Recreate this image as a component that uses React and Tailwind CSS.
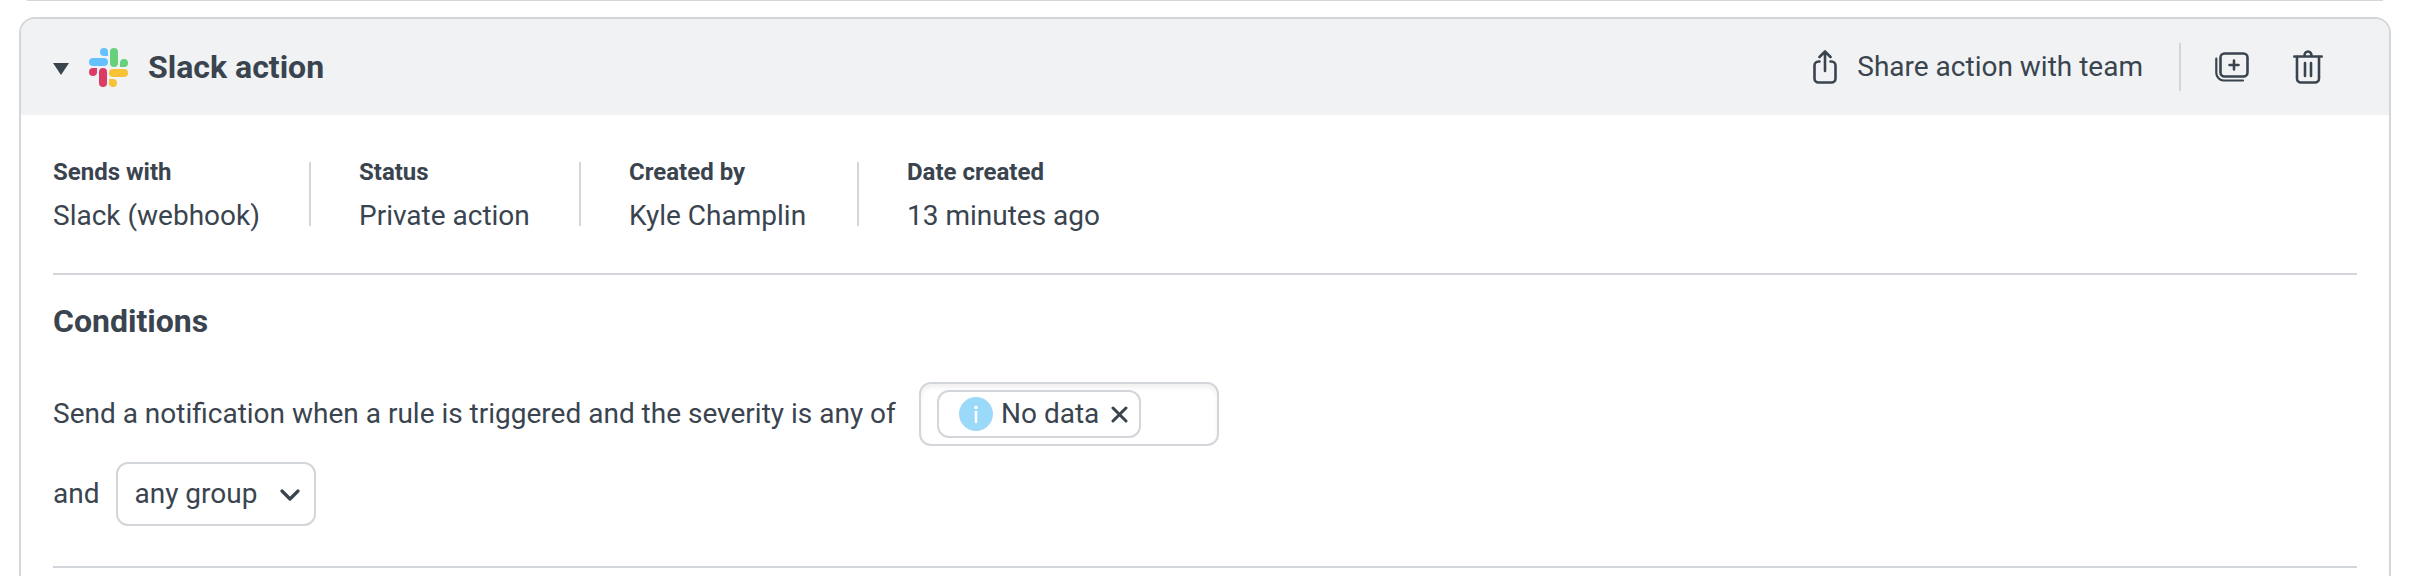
const META = [
  { label: 'Sends with', value: 'Slack (webhook)', box: 'w-[258px] border-r-2' },
  { label: 'Status', value: 'Private action', box: 'w-[270px] border-r-2 pl-12' },
  { label: 'Created by', value: 'Kyle Champlin', box: 'w-[278px] border-r-2 pl-12' },
  { label: 'Date created', value: '13 minutes ago', box: 'pl-12' },
];

function SlackLogo() {
  return (
    <svg width="39" height="39" viewBox="0 0 39 39" aria-hidden="true">
      <g fill="#63c1fd">
        <rect x="0" y="10" width="19" height="8" rx="4" />
        <path d="M19 8h-4a4 4 0 1 1 4-4z" />
      </g>
      <g fill="#66d07a">
        <rect x="21" y="0" width="8" height="19" rx="4" />
        <path d="M31 19v-4a4 4 0 1 1 4 4z" />
      </g>
      <g fill="#f8c237">
        <rect x="20" y="21" width="19" height="8" rx="4" />
        <path d="M20 31h4a4 4 0 1 1-4 4z" />
      </g>
      <g fill="#dc3c63">
        <rect x="10" y="20" width="8" height="19" rx="4" />
        <path d="M8 20v4a4 4 0 1 1-4-4z" />
      </g>
    </svg>
  );
}

function ShareIcon() {
  return (
    <svg width="24" height="34" viewBox="0 0 24 34" fill="none" stroke="currentColor" strokeWidth="2.6" strokeLinecap="round" strokeLinejoin="round" aria-hidden="true">
      <path d="M6.500 11.500H5.500a4 4 0 0 0-4 4V28.500a4 4 0 0 0 4 4H18.500a4 4 0 0 0 4-4V15.500a4 4 0 0 0-4-4H17.500" />
      <path d="M12 21V2M6.500 7 12 1.500l5.500 5.500" />
    </svg>
  );
}

function DuplicateIcon() {
  return (
    <svg width="34" height="30" viewBox="0 0 34 30" fill="none" stroke="currentColor" strokeWidth="2.6" strokeLinecap="round" aria-hidden="true">
      <rect x="5.500" y="1.500" width="27" height="23" rx="4" />
      <path d="M1.300 6.500V21a7.500 7.500 0 0 0 7.500 7.500H28" strokeWidth="2.200" />
      <path d="M19 8.500v9M14.500 13h9" />
    </svg>
  );
}

function TrashIcon() {
  return (
    <svg width="30" height="34" viewBox="0 0 30 34" fill="none" stroke="currentColor" strokeWidth="2.6" strokeLinecap="round" aria-hidden="true">
      <path d="M1.300 6.500H28.700M11.500 5.500a3.500 4 0 0 1 7 0" />
      <path d="M4 7V28.500a4 4 0 0 0 4 4H22a4 4 0 0 0 4-4V7" />
      <path d="M12 13v13M18 13v13" />
    </svg>
  );
}

export default function App() {
  return (
    <main className="flex min-h-screen flex-col bg-white pr-[23px] pl-[19px] font-[Roboto,'Open_Sans',sans-serif] text-[28px] leading-9 text-[#3a444f]">
      <div className="mx-2 mb-4 h-px bg-[#d2d6da]" />
      <section className="flex-1 overflow-hidden rounded-t-2xl border-2 border-b-0 border-[#d2d6da]">
        <header className="flex h-24 items-center bg-[#f1f2f4] px-8">
          <button type="button" aria-label="Collapse" className="mr-5 pt-1">
            <svg width="16" height="12" viewBox="0 0 16 12" fill="currentColor" aria-hidden="true">
              <path d="M0 0h16L8 12z" />
            </svg>
          </button>
          <SlackLogo />
          <h2 className="ml-5 text-[32px] font-bold">Slack action</h2>
          <div className="ml-auto flex h-12 items-center pr-[34px]">
            <button type="button" className="flex items-center gap-5">
              <ShareIcon />
              Share action with team
            </button>
            <span className="mr-[34px] ml-9 h-12 w-0.5 bg-[#d2d6da]" />
            <button type="button" aria-label="Duplicate action">
              <DuplicateIcon />
            </button>
            <button type="button" aria-label="Delete action" className="ml-11">
              <TrashIcon />
            </button>
          </div>
        </header>

        <div className="px-8">
          <dl className="mt-[47px] flex">
            {META.map((m) => (
              <div key={m.label} className={`h-16 border-[#d2d6da] ${m.box}`}>
                <dt className="text-2xl leading-5 font-bold">{m.label}</dt>
                <dd className="mt-4">{m.value}</dd>
              </div>
            ))}
          </dl>
          <hr className="mt-[47px] border-t-2 border-[#d2d6da]" />

          <h3 className="mt-[26px] text-[32px] leading-10 font-bold">Conditions</h3>
          <div className="mt-[41px] flex items-center gap-4">
            <label htmlFor="severity" className="w-[850px]">
              Send a notification when a rule is triggered and the severity is any of
            </label>
            <div className="flex h-16 w-[300px] items-center rounded-xl border-2 border-[#d2d6da] px-4 shadow-[inset_0_4px_4px_#f2f2f2]">
              <span className="flex h-12 shrink-0 items-center rounded-xl border-2 border-[#d2d6da] bg-white pr-[11px] pl-5">
                <svg width="34" height="34" viewBox="0 0 34 34" aria-hidden="true">
                  <circle cx="17" cy="17" r="17" fill="#9bd9f8" />
                  <circle cx="17" cy="10.500" r="1.800" fill="#fff" />
                  <path d="M17 15v10" stroke="#fff" strokeWidth="2.600" strokeLinecap="round" />
                </svg>
                <span className="ml-2">No data</span>
                <button type="button" aria-label="Remove No data" className="ml-3">
                  <svg width="17" height="17" viewBox="0 0 17 17" stroke="currentColor" strokeWidth="3" strokeLinecap="round" aria-hidden="true">
                    <path d="M2 2l13 13M15 2 2 15" />
                  </svg>
                </button>
              </span>
              <input id="severity" type="text" className="w-full min-w-0 bg-transparent outline-none" />
            </div>
          </div>
          <div className="mt-4 flex items-center gap-[17px]">
            <label htmlFor="group">and</label>
            <div className="relative">
              <select id="group" className="h-16 w-[200px] appearance-none rounded-xl border-2 border-[#d2d6da] bg-white pl-4">
                <option>any group</option>
              </select>
              <svg className="pointer-events-none absolute top-[27px] right-4" width="20" height="13" viewBox="0 0 20 13" fill="none" stroke="currentColor" strokeWidth="3.200" strokeLinecap="round" strokeLinejoin="round" aria-hidden="true">
                <path d="M2 2l8 8 8-8" />
              </svg>
            </div>
          </div>
          <hr className="mt-10 border-t-2 border-[#d2d6da]" />
        </div>
      </section>
    </main>
  );
}
